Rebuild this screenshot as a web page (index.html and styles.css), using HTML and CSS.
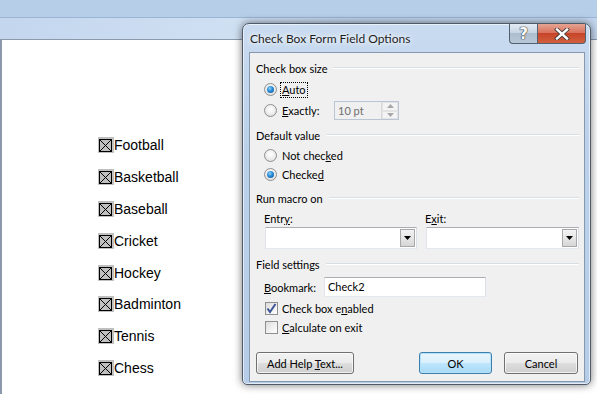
FILE: index.html
```html
<!DOCTYPE html>
<html>
<head>
    <title>Check Box Form Field Options</title>
    <link rel="stylesheet" href="styles.css">
</head>
<body>
    <div class="ribbon">
        <div class="ribbon-top"></div>
        <div class="ribbon-bottom"></div>
    </div>

    <div class="page">
        <!-- Form fields in the document -->
        <ul class="fields">
            <li><svg class="ffbox" viewBox="0 0 16 16"><rect width="16" height="16" fill="#c0c0c0"/><rect x="1.5" y="2.5" width="12" height="12" fill="none" stroke="#000"/><path d="M2 3L13 14M13 3L2 14" stroke="#000" stroke-width="1"/></svg>Football</li>
            <li><svg class="ffbox" viewBox="0 0 16 16"><rect width="16" height="16" fill="#c0c0c0"/><rect x="1.5" y="2.5" width="12" height="12" fill="none" stroke="#000"/><path d="M2 3L13 14M13 3L2 14" stroke="#000" stroke-width="1"/></svg>Basketball</li>
            <li><svg class="ffbox" viewBox="0 0 16 16"><rect width="16" height="16" fill="#c0c0c0"/><rect x="1.5" y="2.5" width="12" height="12" fill="none" stroke="#000"/><path d="M2 3L13 14M13 3L2 14" stroke="#000" stroke-width="1"/></svg>Baseball</li>
            <li><svg class="ffbox" viewBox="0 0 16 16"><rect width="16" height="16" fill="#c0c0c0"/><rect x="1.5" y="2.5" width="12" height="12" fill="none" stroke="#000"/><path d="M2 3L13 14M13 3L2 14" stroke="#000" stroke-width="1"/></svg>Cricket</li>
            <li><svg class="ffbox" viewBox="0 0 16 16"><rect width="16" height="16" fill="#c0c0c0"/><rect x="1.5" y="2.5" width="12" height="12" fill="none" stroke="#000"/><path d="M2 3L13 14M13 3L2 14" stroke="#000" stroke-width="1"/></svg>Hockey</li>
            <li><svg class="ffbox" viewBox="0 0 16 16"><rect width="16" height="16" fill="#c0c0c0"/><rect x="1.5" y="2.5" width="12" height="12" fill="none" stroke="#000"/><path d="M2 3L13 14M13 3L2 14" stroke="#000" stroke-width="1"/></svg>Badminton</li>
            <li><svg class="ffbox" viewBox="0 0 16 16"><rect width="16" height="16" fill="#c0c0c0"/><rect x="1.5" y="2.5" width="12" height="12" fill="none" stroke="#000"/><path d="M2 3L13 14M13 3L2 14" stroke="#000" stroke-width="1"/></svg>Tennis</li>
            <li><svg class="ffbox" viewBox="0 0 16 16"><rect width="16" height="16" fill="#c0c0c0"/><rect x="1.5" y="2.5" width="12" height="12" fill="none" stroke="#000"/><path d="M2 3L13 14M13 3L2 14" stroke="#000" stroke-width="1"/></svg>Chess</li>
        </ul>
    </div>

    <div class="dialog">
        <div class="titlebar">
            <span class="title">Check Box Form Field Options</span>
            <div class="caption-btns">
                <span class="cap help">?</span>
                <span class="cap close"><svg width="16" height="12" viewBox="0 0 16 12"><path d="M3 1.5L13 10.5M13 1.5L3 10.5" stroke="#3a3a3a" stroke-width="4" stroke-linecap="square"/><path d="M3 1.5L13 10.5M13 1.5L3 10.5" stroke="#fff" stroke-width="2.4" stroke-linecap="square"/></svg></span>
            </div>
        </div>

        <div class="panel">
            <!-- Check box size -->
            <div class="group-head"><span>Check box size</span></div>
            <div class="opt-row size-row">
                <span class="radio on"></span>
                <span class="focus"><u>A</u>uto</span>
            </div>
            <div class="opt-row size-row">
                <span class="radio"></span>
                <span class="label"><u>E</u>xactly:</span>
                <div class="spin">
                    <span class="spin-text">10 pt</span>
                    <div class="spin-btns">
                        <span class="spin-btn"><svg width="7" height="4" viewBox="0 0 7 4"><path d="M0 4L3.5 0L7 4Z" fill="#a8a8a8"/></svg></span>
                        <span class="spin-btn"><svg width="7" height="4" viewBox="0 0 7 4"><path d="M0 0L3.5 4L7 0Z" fill="#a8a8a8"/></svg></span>
                    </div>
                </div>
            </div>

            <!-- Default value -->
            <div class="group-head spaced"><span>Default value</span></div>
            <div class="opt-row value-row">
                <span class="radio"></span>
                <span class="label">Not chec<u>k</u>ed</span>
            </div>
            <div class="opt-row value-row tight">
                <span class="radio on"></span>
                <span class="label">Checke<u>d</u></span>
            </div>

            <!-- Run macro on -->
            <div class="group-head spaced"><span>Run macro on</span></div>
            <div class="macro-grid">
                <span class="macro-label">Entr<u>y</u>:</span>
                <span class="macro-label">E<u>x</u>it:</span>
                <div class="combo"><span class="combo-btn"><svg width="7" height="4" viewBox="0 0 7 4"><path d="M0 0L3.5 4L7 0Z" fill="#000"/></svg></span></div>
                <div class="combo"><span class="combo-btn"><svg width="7" height="4" viewBox="0 0 7 4"><path d="M0 0L3.5 4L7 0Z" fill="#000"/></svg></span></div>
            </div>

            <!-- Field settings -->
            <div class="group-head field-head"><span>Field settings</span></div>
            <div class="bookmark-row">
                <span class="label"><u>B</u>ookmark:</span>
                <div class="textbox">Check2</div>
            </div>
            <div class="check-row">
                <span class="checkbox on"><svg width="11" height="11" viewBox="0 0 11 11"><path d="M1.5 5.5L4 9L9.5 1" fill="none" stroke="#3d5498" stroke-width="2"/></svg></span>
                <span class="label">Check box e<u>n</u>abled</span>
            </div>
            <div class="check-row">
                <span class="checkbox"></span>
                <span class="label"><u>C</u>alculate on exit</span>
            </div>

            <div class="buttons">
                <button class="btn help-btn">Add Help <u>T</u>ext...</button>
                <button class="btn ok-btn default">OK</button>
                <button class="btn cancel-btn">Cancel</button>
            </div>
        </div>
    </div>
</body>
</html>
```

FILE: styles.css
```css
body {
    margin: 0;
    width: 597px;
    height: 394px;
    overflow: hidden;
    background-color: #ffffff;
    display: flex;
    flex-direction: column;
    font-family: "Liberation Sans", Arial, sans-serif;
}

.ribbon {
    height: 39px;
    display: flex;
    flex-direction: column;
}

.ribbon-top {
    height: 17px;
    background-color: #b7cee9;
    border-bottom: 1px solid #9bb4d4;
}

.ribbon-bottom {
    flex: 1;
    background: linear-gradient(100deg, #c3d6ee 0%, #d0e0f3 40%, #c1d5ed 60%, #c3d6ee 100%);
}

.page {
    flex: 1;
    border-top: 1px solid #8b99ab;
    border-left: 2px solid #8b99ab;
    background-color: #ffffff;
}

.fields {
    list-style: none;
    margin: 0;
    padding: 89px 0 0 96px;
}

.fields li {
    height: 31.9px;
    display: flex;
    align-items: center;
    font-size: 14px;
    color: #000;
}

.ffbox {
    width: 16px;
    height: 16px;
}

/* Dialog window */
.dialog {
    position: absolute;
    left: 242px;
    top: 23px;
    width: 349px;
    height: 362px;
    box-sizing: border-box;
    border: 1px solid #4f5b69;
    border-radius: 7px 7px 5px 5px;
    background: linear-gradient(180deg, #c9dbf0 0%, #bcd2eb 30%, #b5cce8 100%);
    box-shadow: 0 0 9px rgba(0, 0, 0, 0.55), inset 0 0 0 1px rgba(255, 255, 255, 0.6);
    padding: 0 5px 2px 6px;
    display: flex;
    flex-direction: column;
    font-family: Lato, "Liberation Sans", sans-serif;
    font-size: 11px;
    color: #000;
}

.titlebar {
    height: 28px;
    display: flex;
    align-items: flex-start;
}

.title {
    margin-top: 7px;
    margin-left: 1px;
    font-size: 12px;
    color: #1e1e1e;
    text-shadow: 0 0 8px #ffffff, 0 0 4px #ffffff;
}

.caption-btns {
    margin-left: auto;
    margin-right: -1px;
    display: flex;
}

.cap {
    height: 20px;
    box-sizing: border-box;
    border: 1px solid #52606f;
    border-top: none;
    display: flex;
    align-items: center;
    justify-content: center;
}

.help {
    width: 28px;
    border-radius: 0 0 0 4px;
    border-right: none;
    background: linear-gradient(180deg, #e3ebf4 0%, #c8d5e3 45%, #aebdcd 50%, #b9c8d8 100%);
    color: #fff;
    font-family: "DejaVu Sans", sans-serif;
    font-size: 15px;
    font-weight: bold;
    text-shadow: 0 0 1px #333, 0 0 1px #333, 0 0 1px #333;
}

.close {
    width: 49px;
    border-radius: 0 0 4px 0;
    background: linear-gradient(180deg, #e5a493 0%, #d8735d 45%, #c7442b 50%, #d1603d 100%);
}

.panel {
    flex: 1;
    border: 1px solid #8898ac;
    background-color: #f0f0f0;
    padding: 6px 5px 0 6px;
    display: flex;
    flex-direction: column;
}

.group-head {
    height: 18px;
    display: flex;
    align-items: center;
    gap: 6px;
}

.group-head::after {
    content: "";
    flex: 1;
    border-top: 1px solid #d5dfe5;
    border-bottom: 1px solid #ffffff;
}

.group-head.spaced {
    margin-top: 5px;
}

.opt-row {
    display: flex;
    align-items: center;
    padding-left: 8px;
}

.size-row {
    height: 21px;
}

.group-head + .size-row {
    margin-top: 2px;
}

.value-row {
    height: 19px;
}

.group-head + .value-row {
    margin-top: 2px;
}

.radio {
    width: 13px;
    height: 13px;
    box-sizing: border-box;
    border-radius: 50%;
    border: 1px solid #8f8f8f;
    background: radial-gradient(circle at 50% 40%, #ffffff 0%, #f0f0f0 45%, #d4d4d4 100%);
    display: flex;
    align-items: center;
    justify-content: center;
    flex: none;
}

.radio.on::after {
    content: "";
    width: 7px;
    height: 7px;
    border-radius: 50%;
    background: radial-gradient(circle at 40% 35%, #8ad2f7 0%, #2a8ad4 45%, #0d4f91 100%);
}

.label {
    margin-left: 5px;
}

.focus {
    margin-left: 3px;
    padding: 0 1px;
    height: 14px;
    line-height: 14px;
    border: 1px dotted #000;
}

.spin {
    margin-left: auto;
    margin-right: 180px;
    width: 65px;
    height: 19px;
    box-sizing: border-box;
    border: 1px solid #b9c5d3;
    background-color: #f0f0f0;
    display: flex;
    align-items: center;
}

.spin-text {
    flex: 1;
    padding-left: 3px;
    color: #6d6d6d;
}

.spin-btns {
    width: 16px;
    height: 17px;
    display: flex;
    flex-direction: column;
    border-left: 1px solid #d9d9d9;
}

.spin-btn {
    flex: 1;
    display: flex;
    align-items: center;
    justify-content: center;
    border: 1px solid #e3e3e3;
    background-color: #f4f4f4;
}

.macro-grid {
    margin-top: 3px;
    padding-left: 9px;
    display: grid;
    grid-template-columns: 152px 153px;
    column-gap: 9px;
}

.macro-label {
    height: 17px;
    margin-left: -1px;
    display: flex;
    align-items: center;
}

.combo {
    height: 22px;
    box-sizing: border-box;
    border: 1px solid #abadb3;
    border-left-color: #e2e3ea;
    border-right-color: #dbdfe6;
    border-bottom-color: #e3e9ef;
    background-color: #ffffff;
    display: flex;
    justify-content: flex-end;
    padding: 1px;
}

.combo-btn {
    width: 15px;
    box-sizing: border-box;
    border: 1px solid #a8a8a8;
    background: linear-gradient(180deg, #f2f2f2 0%, #e6e6e6 50%, #d6d6d6 100%);
    display: flex;
    align-items: center;
    justify-content: center;
}

.field-head {
    margin-top: 6px;
}

.bookmark-row {
    margin-top: 4px;
    height: 20px;
    padding-left: 8px;
    display: flex;
    align-items: center;
}

.bookmark-row .label {
    margin-left: 0;
    width: 60px;
}

.textbox {
    width: 162px;
    height: 20px;
    box-sizing: border-box;
    border: 1px solid #abadb3;
    border-left-color: #e2e3ea;
    border-right-color: #dbdfe6;
    border-bottom-color: #e3e9ef;
    background-color: #ffffff;
    padding-left: 3px;
    line-height: 18px;
}

.check-row {
    height: 19px;
    padding-left: 9px;
    display: flex;
    align-items: center;
}

.bookmark-row + .check-row {
    margin-top: 2px;
}

.check-row .label {
    margin-left: 4px;
}

.checkbox {
    width: 13px;
    height: 13px;
    box-sizing: border-box;
    border: 1px solid #8f8f8f;
    background: linear-gradient(135deg, #dcdcdc 0%, #f2f2f2 60%, #ffffff 100%);
    display: flex;
    align-items: center;
    justify-content: center;
    flex: none;
}

.buttons {
    margin-top: 15px;
    margin-right: 1px;
    display: flex;
    gap: 12px;
}

.btn {
    height: 22px;
    box-sizing: border-box;
    padding: 0;
    border: 1px solid #707070;
    border-radius: 3px;
    background: linear-gradient(180deg, #f2f2f2 0%, #ebebeb 48%, #dddddd 52%, #cfcfcf 100%);
    box-shadow: inset 0 0 0 1px rgba(255, 255, 255, 0.7);
    font-family: Lato, "Liberation Sans", sans-serif;
    font-size: 11px;
    color: #000;
}

.help-btn {
    width: 98px;
}

.ok-btn {
    width: 73px;
    margin-left: auto;
}

.cancel-btn {
    width: 74px;
}

.btn.default {
    border-color: #3c7fb1;
    background: linear-gradient(180deg, #eaf6fd 0%, #d9f0fc 48%, #bee6fd 52%, #a7d9f5 100%);
    box-shadow: inset 0 0 0 1px #b6e0f7;
}
```
